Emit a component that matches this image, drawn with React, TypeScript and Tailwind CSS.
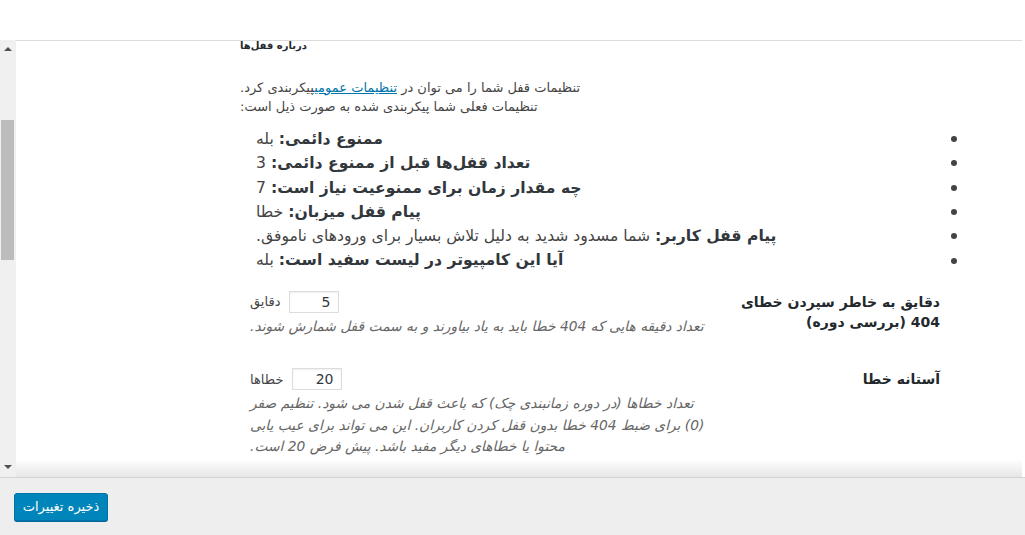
const items: [string, string][] = [
  ["ممنوع دائمی:", "بله"],
  ["تعداد قفل‌ها قبل از ممنوع دائمی:", "3"],
  ["چه مقدار زمان برای ممنوعیت نیاز است:", "7"],
  ["پیام قفل میزبان:", "خطا"],
  ["پیام قفل کاربر:", "شما مسدود شدید به دلیل تلاش بسیار برای ورودهای ناموفق."],
  ["آیا این کامپیوتر در لیست سفید است:", "بله"],
]

function Scrollbar() {
  return (
    <div className="w-4 shrink-0 bg-[#f0f0f0] flex flex-col items-center">
      <div className="h-[7px]" />
      <div className="w-0 h-0 border-l-[4px] border-r-[4px] border-b-[4px] border-l-transparent border-r-transparent border-b-[#505050]" />
      <div className="h-[69px]" />
      <div className="w-[13px] h-[140px] bg-[#bcbcbc] self-start ml-px" />
      <div className="flex-1" />
      <div className="w-0 h-0 border-l-[4px] border-r-[4px] border-t-[4px] border-l-transparent border-r-transparent border-t-[#505050]" />
      <div className="h-[8px]" />
    </div>
  )
}

function Row({
  label,
  unit,
  value,
  desc,
}: {
  label: string[]
  unit: string
  value: string
  desc: string[]
}) {
  return (
    <div className="flex">
      <div className="w-[490px] flex flex-col items-start">
        <div className="flex items-center gap-[9px] h-[22px]">
          <span dir="rtl" className="text-[13px] text-[#444]">{unit}</span>
          <input
            readOnly
            value={value}
            className="w-[50px] h-[22px] border border-[#ddd] bg-white text-right pr-[8px] text-[14px] text-[#32373c] shadow-[inset_0_1px_2px_rgba(0,0,0,0.07)] outline-none"
          />
        </div>
        <div className="mt-[3px] text-[13.8px] italic text-[#666] leading-[21.5px] whitespace-nowrap">
          {desc.map((d) => (
            <div key={d} dir="rtl" className="text-left">{d}</div>
          ))}
        </div>
      </div>
      <div className="w-[200px] text-[14px] font-bold text-[#23282d] leading-[20px] pt-[1px] whitespace-nowrap">
        {label.map((l) => (
          <div key={l} dir="rtl" className="text-right">{l}</div>
        ))}
      </div>
    </div>
  )
}

export default function App() {
  return (
    <div className="h-[535px] w-[1025px] bg-white flex flex-col overflow-hidden font-['DejaVu_Sans',sans-serif]">
      <div className="h-[40px] shrink-0" />
      <div className="flex-1 flex min-h-0">
        <Scrollbar />
        <div className="flex-1 relative overflow-hidden border-t border-[#dcdcdc] mr-[3px]">
          <div className="pl-[224px] -mt-[2px]">
            <div dir="rtl" className="text-left text-[10px] font-bold text-[#23282d] leading-[14px]">
              درباره قفل‌ها
            </div>
            <div className="mt-[25px] text-[13px] text-[#444] leading-[19px]">
              <div dir="rtl" className="text-left">
                تنظیمات قفل شما را می توان در{" "}
                <span className="text-[#0073aa] underline">تنظیمات عمومی</span>پیکربندی کرد.
              </div>
              <div dir="rtl" className="text-left">تنظیمات فعلی شما پیکربندی شده به صورت ذیل است:</div>
            </div>
            <ul className="mt-[11px] pl-[16px] w-[722px] text-[15.6px] leading-[24.3px]">
              {items.map(([k, v]) => (
                <li key={k} className="flex items-center justify-between">
                  <span dir="rtl" className="text-[#444]">
                    <b className="text-[#32373c]">{k}</b> {v}
                  </span>
                  <span className="w-[6px] h-[6px] rounded-full bg-[#444] mr-[5px]" />
                </li>
              ))}
            </ul>
            <div className="mt-[18px] pl-[10px] flex flex-col gap-[31px]">
              <Row
                label={["دقایق به خاطر سپردن خطای", "404 (بررسی دوره)"]}
                unit="دقایق"
                value="5"
                desc={["تعداد دقیقه هایی که 404 خطا باید به یاد بیاورند و به سمت قفل شمارش شوند."]}
              />
              <Row
                label={["آستانه خطا"]}
                unit="خطاها"
                value="20"
                desc={[
                  "تعداد خطاها (در دوره زمانبندی چک) که باعث قفل شدن می شود. تنظیم صفر",
                  "(0) برای ضبط 404 خطا بدون قفل کردن کاربران. این می تواند برای عیب یابی",
                  "محتوا یا خطاهای دیگر مفید باشد. پیش فرض 20 است.",
                ]}
              />
            </div>
          </div>
          <div className="absolute left-0 right-0 bottom-0 h-[18px] bg-gradient-to-b from-white/0 to-[#e6e6e6]" />
        </div>
      </div>
      <div className="h-[58px] shrink-0 bg-[#eeeeee] border-t border-[#d4d4d4] flex items-start pl-[14px] pt-[15px]">
        <button className="h-[28px] w-[94px] rounded-[3px] bg-[#0085ba] border border-[#0073aa] shadow-[0_1px_0_#006799] text-white text-[13px]">
          <span dir="rtl">ذخیره تغییرات</span>
        </button>
      </div>
    </div>
  )
}
